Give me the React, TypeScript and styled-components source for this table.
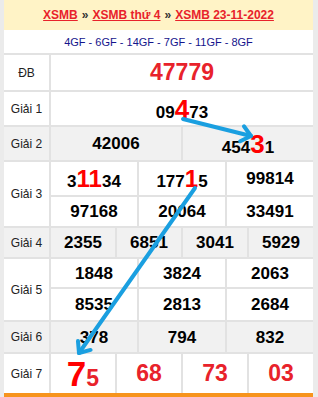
import React from "react";
import styled, { createGlobalStyle } from "styled-components";

const GlobalStyle = createGlobalStyle`
  body {
    margin: 0;
    font-family: "Liberation Sans", Arial, sans-serif;
    background: #ebebeb;
  }
`;

const RED = "#e8222b";
const HOT = "#ff0000";
const LINE = "#e2e2e2";
const SHADE = "#f1f1f1";

// khung ngoài, viền xám hai bên
const Frame = styled.div`
  position: relative;
  width: 318px;
  height: 397px;
  box-sizing: border-box;
  padding: 0 5px 0 4px;
  background: #ebebeb;
  overflow: hidden;
`;

const Header = styled.div`
  height: 30px;
  display: flex;
  align-items: center;
  justify-content: center;
  gap: 4px;
  background: #fff3c6;
  font-size: 12px;
  font-weight: bold;
`;

const Crumb = styled.a`
  color: ${RED};
  text-decoration: underline;
  cursor: pointer;
`;

const Sep = styled.span`
  color: #333;
`;

const Board = styled.div`
  display: grid;
  grid-template-columns: 45px repeat(12, 1fr);
  grid-template-rows: 23px 35px 33px 33px 33px 29px 29px 28px 31px 30px 39px;
  gap: 2px;
  background: ${LINE};
  border-bottom: 6px solid #f7941d;
`;

const GfCell = styled.div`
  grid-column: 1 / -1;
  display: flex;
  align-items: center;
  justify-content: center;
  background: #fff;
  color: #14148c;
  font-size: 11px;
`;

const Label = styled.div<{ $rows: number; $shade?: boolean }>`
  grid-row: span ${(p) => p.$rows};
  display: flex;
  align-items: center;
  justify-content: center;
  background: ${(p) => (p.$shade ? SHADE : "#fff")};
  color: #222;
  font-size: 12px;
`;

const Cell = styled.div<{ $span: number; $shade?: boolean }>`
  grid-column: span ${(p) => p.$span};
  display: flex;
  align-items: center;
  justify-content: center;
  background: ${(p) => (p.$shade ? SHADE : "#fff")};
`;

const Num = styled.span<{ $size: number; $red?: boolean }>`
  font-size: ${(p) => p.$size}px;
  font-weight: bold;
  line-height: 1;
  color: ${(p) => (p.$red ? RED : "#000")};
`;

const Hot = styled.span<{ $size: number }>`
  font-size: ${(p) => p.$size}px;
  color: ${HOT};
  line-height: 1;
`;

const Arrows = styled.svg`
  position: absolute;
  left: 0;
  top: 0;
  pointer-events: none;
`;

type Prize = {
  label: string;
  shade?: boolean;
  red?: boolean;
  size: number;
  hot: number;
  rows: string[][];
};

// chữ số trong [] là số được bôi đỏ
const prizes: Prize[] = [
  { label: "ĐB", red: true, size: 23, hot: 23, rows: [["47779"]] },
  { label: "Giải 1", size: 17, hot: 26, rows: [["09[4]73"]] },
  { label: "Giải 2", shade: true, size: 17, hot: 26, rows: [["42006", "454[3]1"]] },
  {
    label: "Giải 3",
    size: 17,
    hot: 24,
    rows: [
      ["3[11]34", "177[1]5", "99814"],
      ["97168", "20064", "33491"],
    ],
  },
  { label: "Giải 4", shade: true, size: 17, hot: 17, rows: [["2355", "6851", "3041", "5929"]] },
  {
    label: "Giải 5",
    size: 17,
    hot: 17,
    rows: [
      ["1848", "3824", "2063"],
      ["8535", "2813", "2684"],
    ],
  },
  { label: "Giải 6", shade: true, size: 17, hot: 17, rows: [["378", "794", "832"]] },
  { label: "Giải 7", red: true, size: 23, hot: 35, rows: [["[7]5", "68", "73", "03"]] },
];

function Number({ value, prize }: { value: string; prize: Prize }) {
  const parts = value.split(/(\[[0-9]+\])/).filter(Boolean);
  return (
    <Num $size={prize.size} $red={prize.red}>
      {parts.map((p, i) =>
        p.startsWith("[") ? (
          <Hot key={i} $size={prize.hot}>
            {p.slice(1, -1)}
          </Hot>
        ) : (
          <span key={i}>{p}</span>
        )
      )}
    </Num>
  );
}

function Arrow({ x1, y1, x2, y2 }: { x1: number; y1: number; x2: number; y2: number }) {
  const a = Math.atan2(y2 - y1, x2 - x1) + Math.PI;
  const len = 12;
  const spread = (40 * Math.PI) / 180;
  const p1 = [x2 + len * Math.cos(a - spread), y2 + len * Math.sin(a - spread)];
  const p2 = [x2 + len * Math.cos(a + spread), y2 + len * Math.sin(a + spread)];
  return (
    <g stroke="#1a9fe0" strokeWidth={4} strokeLinecap="round" strokeLinejoin="round" fill="none">
      <line x1={x1} y1={y1} x2={x2} y2={y2} />
      <polyline points={`${p1[0]},${p1[1]} ${x2},${y2} ${p2[0]},${p2[1]}`} />
    </g>
  );
}

export default function App() {
  return (
    <Frame>
      <GlobalStyle />
      <Header>
        <Crumb>XSMB</Crumb>
        <Sep>»</Sep>
        <Crumb>XSMB thứ 4</Crumb>
        <Sep>»</Sep>
        <Crumb>XSMB 23-11-2022</Crumb>
      </Header>
      <Board>
        <GfCell>4GF - 6GF - 14GF - 7GF - 11GF - 8GF</GfCell>
        {prizes.map((prize) => (
          <React.Fragment key={prize.label}>
            <Label $rows={prize.rows.length} $shade={prize.shade}>
              {prize.label}
            </Label>
            {prize.rows.map((row) =>
              row.map((value, i) => (
                <Cell key={prize.label + value + i} $span={12 / row.length} $shade={prize.shade}>
                  <Number value={value} prize={prize} />
                </Cell>
              ))
            )}
          </React.Fragment>
        ))}
      </Board>
      <Arrows width={318} height={397}>
        <Arrow x1={183} y1={119} x2={251} y2={136} />
        <Arrow x1={195} y1={188} x2={79} y2={353} />
      </Arrows>
    </Frame>
  );
}
